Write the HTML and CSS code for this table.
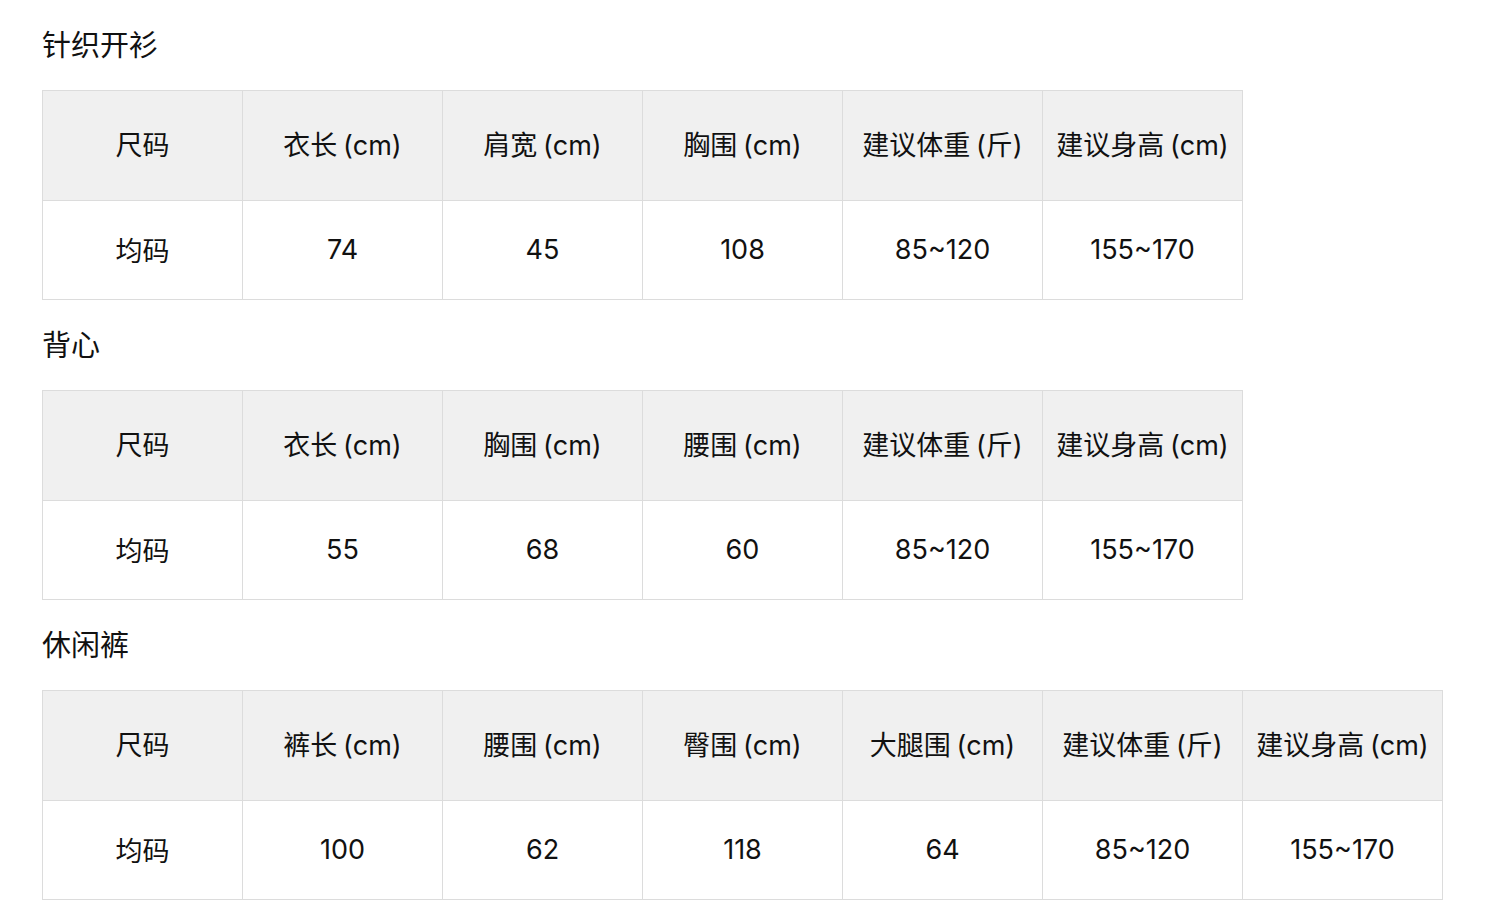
FILE: index.html
```html
<!DOCTYPE html>
<html lang="zh-CN">
<head>
<meta charset="utf-8">
<title>尺码表</title>
<link rel="stylesheet" href="styles.css">
</head>
<body>
<div class="page">
  <section class="section">
    <h2 class="title">针织开衫</h2>
    <table class="size-table">
      <tr class="head">
        <th>尺码</th><th>衣长 (cm)</th><th>肩宽 (cm)</th><th>胸围 (cm)</th><th>建议体重 (斤)</th><th>建议身高 (cm)</th>
      </tr>
      <tr class="body">
        <td>均码</td><td>74</td><td>45</td><td>108</td><td>85~120</td><td>155~170</td>
      </tr>
    </table>
  </section>
  <section class="section">
    <h2 class="title">背心</h2>
    <table class="size-table">
      <tr class="head">
        <th>尺码</th><th>衣长 (cm)</th><th>胸围 (cm)</th><th>腰围 (cm)</th><th>建议体重 (斤)</th><th>建议身高 (cm)</th>
      </tr>
      <tr class="body">
        <td>均码</td><td>55</td><td>68</td><td>60</td><td>85~120</td><td>155~170</td>
      </tr>
    </table>
  </section>
  <section class="section">
    <h2 class="title">休闲裤</h2>
    <table class="size-table">
      <tr class="head">
        <th>尺码</th><th>裤长 (cm)</th><th>腰围 (cm)</th><th>臀围 (cm)</th><th>大腿围 (cm)</th><th>建议体重 (斤)</th><th>建议身高 (cm)</th>
      </tr>
      <tr class="body">
        <td>均码</td><td>100</td><td>62</td><td>118</td><td>64</td><td>85~120</td><td>155~170</td>
      </tr>
    </table>
  </section>
</div>
</body>
</html>
```
FILE: styles.css
```css
html, body {
  margin: 0;
  padding: 0;
  background: #fff;
}
body {
  font-family: "Inter", "Noto Sans CJK SC", "Noto Sans", sans-serif;
  color: #111;
}
.page {
  padding: 0 42px;
  display: flex;
  flex-direction: column;
  align-items: flex-start;
}
.section {
  display: flex;
  flex-direction: column;
  align-items: flex-start;
}
.title {
  margin: 0;
  height: 90px;
  display: flex;
  align-items: center;
  font-size: 29px;
  font-weight: 400;
  line-height: 1;
}
.size-table {
  border-collapse: collapse;
  table-layout: fixed;
}
.size-table th,
.size-table td {
  width: 199px;
  border: 1px solid #dcdcdc;
  text-align: center;
  vertical-align: middle;
  font-size: 27px;
  font-weight: 400;
  padding: 0;
  white-space: nowrap;
  word-spacing: -2px;
}
.size-table .head th {
  height: 105px;
  padding-bottom: 4px;
  background: #f0f0f0;
}
.size-table .body td {
  height: 97px;
  padding-bottom: 1px;
  background: #fff;
}
```
